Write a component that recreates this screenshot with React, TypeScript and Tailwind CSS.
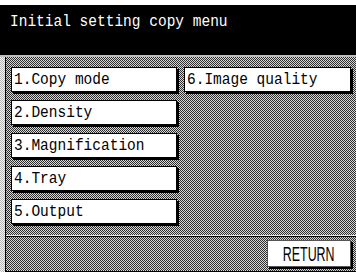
const mono = "font-['Liberation_Mono','DejaVu_Sans_Mono',monospace]"
const dither = 'bg-[image:repeating-conic-gradient(#2e2e2e_0_25%,#d6d6d6_0_50%)] bg-[length:2px_2px]'
const lightDither = 'bg-[image:repeating-conic-gradient(#b8b8b8_0_25%,#f4f4f4_0_50%)] bg-[length:2px_2px]'

const leftItems = ['1.Copy mode', '2.Density', '3.Magnification', '4.Tray', '5.Output']

function MenuButton({ label }: { label: string }) {
  return (
    <button
      type="button"
      className={`flex h-[25px] items-center border border-black bg-white pl-[2px] text-left text-[14.5px] leading-none text-black shadow-[2px_2px_0_#000] ${mono}`}
    >
      <span className="inline-block scale-y-[1.15]">{label}</span>
    </button>
  )
}

export default function App() {
  return (
    <div className="h-[276px] w-[356px] overflow-hidden bg-white">
      <div className="h-[5px]" />
      <header className={`h-[50px] bg-black pl-[10px] pt-[6px] text-[14.5px] leading-[18px] text-white ${mono}`}>
        <span className="inline-block origin-top scale-y-[1.15]">Initial setting copy menu</span>
      </header>
      <div className="h-[2px] bg-[#bdbdbd]" />
      <div className="flex h-[215px]">
        <div className={`w-[5px] ${lightDither}`} />
        <div className={`flex flex-1 flex-col border-b border-l border-black ${dither}`}>
          <div className="flex h-[178px] gap-[7px] pl-[5px] pt-[10px]">
            <div className="flex w-[166px] flex-col gap-[8px]">
              {leftItems.map((item) => (
                <MenuButton key={item} label={item} />
              ))}
            </div>
            <div className="flex w-[167px] flex-col">
              <MenuButton label="6.Image quality" />
            </div>
          </div>
          <div className="h-px bg-[#e8e8e8]" />
          <div className="flex flex-1 justify-end border-t border-black pr-[5px] pt-[3px]">
            <button
              type="button"
              className="flex h-[27px] w-[84px] items-center justify-center border border-[#555] bg-white shadow-[2px_2px_0_#000]"
            >
              <span className="inline-block scale-x-[0.62] font-['Liberation_Sans',Arial,sans-serif] text-[20px] leading-none text-black">
                RETURN
              </span>
            </button>
          </div>
        </div>
      </div>
    </div>
  )
}
